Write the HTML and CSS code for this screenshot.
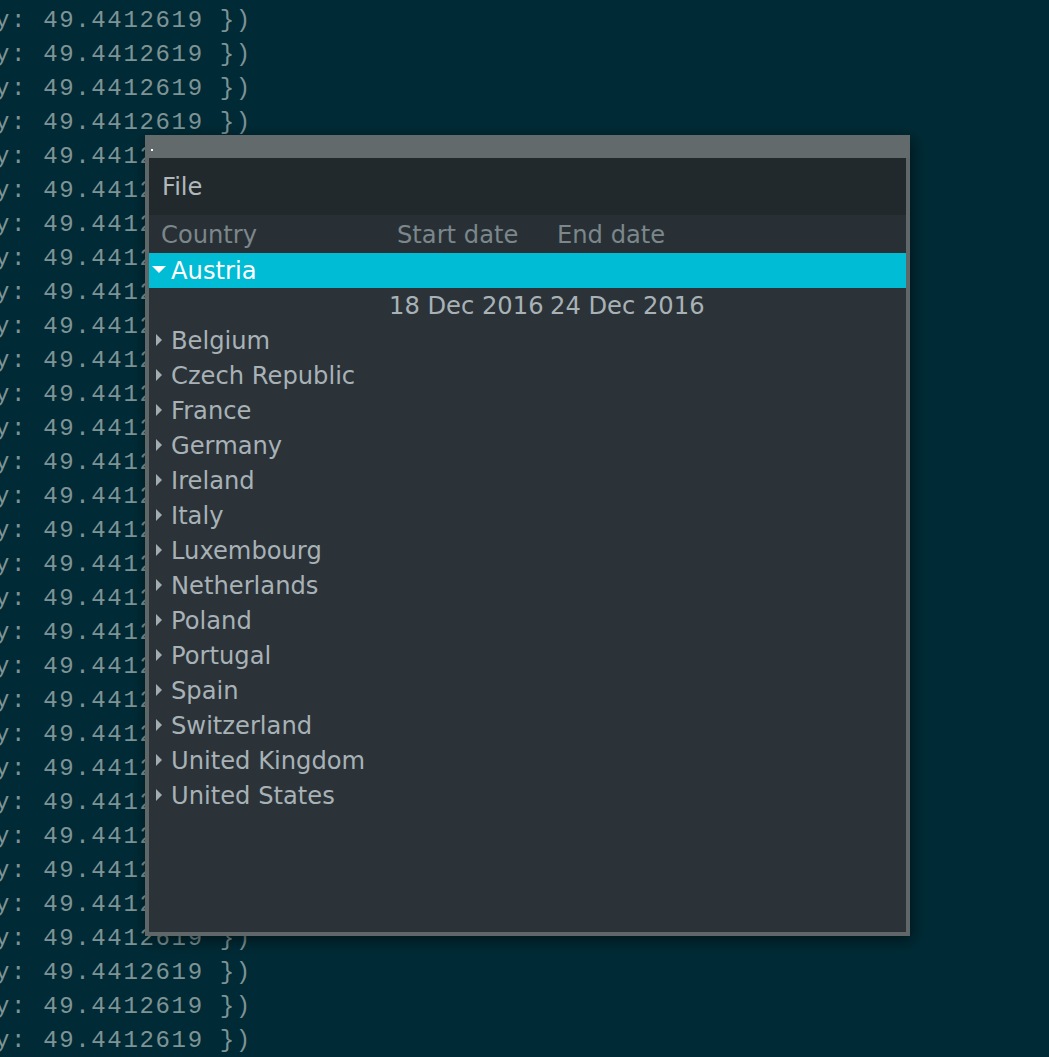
FILE: index.html
```html
<!DOCTYPE html>
<html>
<head>
<meta charset="utf-8">
<link rel="stylesheet" href="styles.css">
</head>
<body>
<div class="term">
<div class="tl">y: 49.4412619 })</div><div class="tl">y: 49.4412619 })</div><div class="tl">y: 49.4412619 })</div><div class="tl">y: 49.4412619 })</div><div class="tl">y: 49.4412619 })</div><div class="tl">y: 49.4412619 })</div><div class="tl">y: 49.4412619 })</div><div class="tl">y: 49.4412619 })</div><div class="tl">y: 49.4412619 })</div><div class="tl">y: 49.4412619 })</div><div class="tl">y: 49.4412619 })</div><div class="tl">y: 49.4412619 })</div><div class="tl">y: 49.4412619 })</div><div class="tl">y: 49.4412619 })</div><div class="tl">y: 49.4412619 })</div><div class="tl">y: 49.4412619 })</div><div class="tl">y: 49.4412619 })</div><div class="tl">y: 49.4412619 })</div><div class="tl">y: 49.4412619 })</div><div class="tl">y: 49.4412619 })</div><div class="tl">y: 49.4412619 })</div><div class="tl">y: 49.4412619 })</div><div class="tl">y: 49.4412619 })</div><div class="tl">y: 49.4412619 })</div><div class="tl">y: 49.4412619 })</div><div class="tl">y: 49.4412619 })</div><div class="tl">y: 49.4412619 })</div><div class="tl">y: 49.4412619 })</div><div class="tl">y: 49.4412619 })</div><div class="tl">y: 49.4412619 })</div><div class="tl">y: 49.4412619 })</div>
</div>

<div class="window">
  <div class="titlebar"><span class="dot"></span></div>
  <div class="frame">
    <div class="menubar"><span class="menu-item">File</span></div>
    <div class="header">
      <div class="hcell hc-country">Country</div>
      <div class="hcell hc-start">Start date</div>
      <div class="hcell hc-end">End date</div>
    </div>
    <div class="rows">
      <div class="row selected"><span class="arrow-slot"><span class="arrow-down"></span></span><span class="name">Austria</span></div>
      <div class="row child"><span class="c-country"></span><span class="c-start">18 Dec 2016</span><span class="c-end">24 Dec 2016</span></div>
      <div class="row"><span class="arrow-slot"><span class="arrow-right"></span></span><span class="name">Belgium</span></div>
      <div class="row"><span class="arrow-slot"><span class="arrow-right"></span></span><span class="name">Czech Republic</span></div>
      <div class="row"><span class="arrow-slot"><span class="arrow-right"></span></span><span class="name">France</span></div>
      <div class="row"><span class="arrow-slot"><span class="arrow-right"></span></span><span class="name">Germany</span></div>
      <div class="row"><span class="arrow-slot"><span class="arrow-right"></span></span><span class="name">Ireland</span></div>
      <div class="row"><span class="arrow-slot"><span class="arrow-right"></span></span><span class="name">Italy</span></div>
      <div class="row"><span class="arrow-slot"><span class="arrow-right"></span></span><span class="name">Luxembourg</span></div>
      <div class="row"><span class="arrow-slot"><span class="arrow-right"></span></span><span class="name">Netherlands</span></div>
      <div class="row"><span class="arrow-slot"><span class="arrow-right"></span></span><span class="name">Poland</span></div>
      <div class="row"><span class="arrow-slot"><span class="arrow-right"></span></span><span class="name">Portugal</span></div>
      <div class="row"><span class="arrow-slot"><span class="arrow-right"></span></span><span class="name">Spain</span></div>
      <div class="row"><span class="arrow-slot"><span class="arrow-right"></span></span><span class="name">Switzerland</span></div>
      <div class="row"><span class="arrow-slot"><span class="arrow-right"></span></span><span class="name">United Kingdom</span></div>
      <div class="row"><span class="arrow-slot"><span class="arrow-right"></span></span><span class="name">United States</span></div>
    </div>
  </div>
</div>
</body>
</html>
```

FILE: styles.css
```css
html, body {
  margin: 0;
  padding: 0;
}
body {
  width: 1049px;
  height: 1057px;
  overflow: hidden;
  background: #002b36;
  position: relative;
}
.term {
  padding-top: 4px;
  margin-left: -5px;
  font-family: "Liberation Mono", monospace;
  font-size: 24px;
  letter-spacing: 1.65px;
  line-height: 34px;
  color: #7f9395;
}
.tl {
  white-space: pre;
  height: 34px;
}

.window {
  position: absolute;
  left: 145px;
  top: 135px;
  width: 765px;
  height: 801px;
  display: flex;
  flex-direction: column;
  box-shadow: 2px 4px 14px rgba(0, 0, 0, 0.55);
  font-family: "DejaVu Sans", sans-serif;
  font-size: 24.2px;
}
.titlebar {
  height: 23px;
  background: #626a6b;
  position: relative;
  flex: none;
}
.dot {
  position: absolute;
  left: 6px;
  top: 14px;
  width: 2px;
  height: 2px;
  background: #ffffff;
}
.frame {
  flex: 1;
  border: 4px solid #5f6768;
  border-top: none;
  background: #2b3339;
  display: flex;
  flex-direction: column;
}
.menubar {
  height: 57px;
  box-sizing: border-box;
  background: #22292d;
  padding: 0 0 0 13px;
  display: flex;
  align-items: flex-start;
}
.menu-item {
  line-height: 35px;
  padding-top: 12px;
  color: #b0b8bb;
}
.header {
  height: 38px;
  box-sizing: border-box;
  background: #283035;
  display: flex;
  padding-top: 3px;
  line-height: 35px;
  color: #7b878b;
}
.hcell {
  white-space: nowrap;
}
.hc-country {
  width: 240px;
  box-sizing: border-box;
  padding-left: 12px;
}
.hc-start {
  width: 160px;
  box-sizing: border-box;
  padding-left: 8px;
}
.hc-end {
  padding-left: 8px;
}
.rows {
  display: flex;
  flex-direction: column;
}
.row {
  height: 35px;
  box-sizing: border-box;
  padding-top: 2px;
  line-height: 33px;
  display: flex;
  align-items: center;
  color: #a8b2b6;
  white-space: nowrap;
}
.row.selected {
  background: #00bcd4;
  color: #ffffff;
}
.arrow-slot {
  width: 21px;
  height: 33px;
  display: flex;
  align-items: center;
  justify-content: center;
  flex: none;
}
.arrow-right {
  width: 0;
  height: 0;
  border-left: 6px solid #a3acb0;
  border-top: 6px solid transparent;
  border-bottom: 6px solid transparent;
  margin-top: -3px;
  margin-left: -2px;
}
.arrow-down {
  width: 0;
  height: 0;
  border-top: 7px solid #ffffff;
  border-left: 7px solid transparent;
  border-right: 7px solid transparent;
  margin-top: -4px;
  margin-left: -1px;
}
.name {
  padding-left: 1px;
}
.c-country {
  width: 240px;
  flex: none;
}
.c-start {
  width: 161px;
  flex: none;
}
```
